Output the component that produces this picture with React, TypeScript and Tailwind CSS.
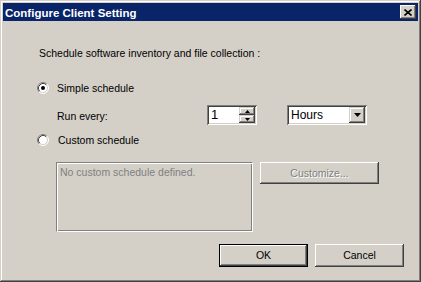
import React from "react";

const font = { fontFamily: '"Liberation Sans", Arial, sans-serif' };

function Radio({ checked }: { checked?: boolean }) {
  return (
    <svg width="12" height="12" viewBox="0 0 12 12" className="shrink-0">
      <circle cx="6" cy="6" r="5" fill="#ffffff" />
      <path d="M2.11 9.89 A5.5 5.5 0 0 1 9.89 2.11" fill="none" stroke="#808080" strokeWidth="1" />
      <path d="M9.89 2.11 A5.5 5.5 0 0 1 2.11 9.89" fill="none" stroke="#ffffff" strokeWidth="1" />
      <path d="M2.82 9.18 A4.5 4.5 0 0 1 9.18 2.82" fill="none" stroke="#404040" strokeWidth="1" />
      <path d="M9.18 2.82 A4.5 4.5 0 0 1 2.82 9.18" fill="none" stroke="#d4d0c8" strokeWidth="1" />
      {checked && <circle cx="6" cy="6" r="2" fill="#000000" />}
    </svg>
  );
}

function SpinBox() {
  return (
    <div className="flex h-[20px] w-[50px] bg-white p-[2px] shadow-[inset_1px_1px_#808080,inset_-1px_-1px_#ffffff,inset_2px_2px_#404040,inset_-2px_-2px_#d4d0c8]">
      <div className="flex-1 pl-[2px] text-[13px] leading-[16px] text-black">1</div>
      <div className="flex w-[16px] flex-col">
        <div className="flex flex-1 items-center justify-center bg-[#d4d0c8] shadow-[inset_-1px_-1px_#404040,inset_1px_1px_#d4d0c8,inset_-2px_-2px_#808080,inset_2px_2px_#ffffff]">
          <svg width="5" height="3" viewBox="0 0 5 3">
            <polygon points="2.5,0 5,3 0,3" fill="#000" />
          </svg>
        </div>
        <div className="flex flex-1 items-center justify-center bg-[#d4d0c8] shadow-[inset_-1px_-1px_#404040,inset_1px_1px_#d4d0c8,inset_-2px_-2px_#808080,inset_2px_2px_#ffffff]">
          <svg width="5" height="3" viewBox="0 0 5 3">
            <polygon points="0,0 5,0 2.5,3" fill="#000" />
          </svg>
        </div>
      </div>
    </div>
  );
}

function Dropdown() {
  return (
    <div className="ml-[30px] flex h-[20px] w-[80px] bg-white p-[2px] shadow-[inset_1px_1px_#808080,inset_-1px_-1px_#ffffff,inset_2px_2px_#404040,inset_-2px_-2px_#d4d0c8]">
      <div className="flex-1 pl-[2px] text-[12px] leading-[16px] text-black">Hours</div>
      <div className="flex w-[16px] items-center justify-center bg-[#d4d0c8] shadow-[inset_-1px_-1px_#404040,inset_1px_1px_#d4d0c8,inset_-2px_-2px_#808080,inset_2px_2px_#ffffff]">
        <svg width="7" height="4" viewBox="0 0 7 4">
          <polygon points="0,0 7,0 3.5,4" fill="#000" />
        </svg>
      </div>
    </div>
  );
}

function Button({ label, primary, disabled, className }: { label: string; primary?: boolean; disabled?: boolean; className?: string }) {
  return (
    <div
      className={
        "flex items-center justify-center bg-[#d4d0c8] text-[10.5px] leading-[13px] " +
        (primary
          ? "border border-black shadow-[inset_-1px_-1px_#404040,inset_1px_1px_#ffffff,inset_-2px_-2px_#808080] "
          : "shadow-[inset_-1px_-1px_#404040,inset_1px_1px_#ffffff,inset_-2px_-2px_#808080] ") +
        (disabled ? "text-[#808080] [text-shadow:1px_1px_0_#ffffff] " : "text-black ") +
        (className ?? "")
      }
    >
      {label}
    </div>
  );
}

export default function App() {
  return (
    <div
      className="flex h-[282px] w-[421px] flex-col bg-[#d4d0c8] p-[3px] shadow-[inset_-1px_-1px_#404040,inset_1px_1px_#d4d0c8,inset_-2px_-2px_#808080,inset_2px_2px_#ffffff]"
      style={font}
    >
      <div className="flex h-[18px] items-start justify-between bg-[#0a246a] pl-[2px] pr-[2px]">
        <span className="mt-[4px] text-[11.5px] font-bold leading-[13px] text-white">Configure Client Setting</span>
        <div className="mt-[2px] flex h-[14px] w-[16px] items-center justify-center bg-[#d4d0c8] shadow-[inset_-1px_-1px_#404040,inset_1px_1px_#ffffff,inset_-2px_-2px_#808080]">
          <svg width="8" height="7" viewBox="0 0 8 7">
            <path d="M0.5 0.5 L7.5 6.5 M7.5 0.5 L0.5 6.5" stroke="#000" strokeWidth="1.6" />
          </svg>
        </div>
      </div>

      <div className="flex flex-1 flex-col pl-[34px] text-[10.5px] leading-[13px] text-black">
        <div className="ml-[2px] mt-[26px]">Schedule software inventory and file collection :</div>

        <div className="mt-[22px] flex h-[12px] items-center">
          <Radio checked />
          <span className="ml-[8px]">Simple schedule</span>
        </div>

        <div className="mt-[11px] flex h-[20px] items-start">
          <span className="ml-[20px] mt-[5px] w-[150px]">Run every:</span>
          <SpinBox />
          <Dropdown />
        </div>

        <div className="mt-[9px] flex h-[12px] items-center">
          <Radio />
          <span className="ml-[9px]">Custom schedule</span>
        </div>

        <div className="mt-[16px] flex items-start">
          <div className="ml-[19px] h-[70px] w-[197px] border-b border-l border-r border-t border-b-white border-l-[#808080] border-r-white border-t-[#808080] px-[3px] pt-[3px] text-[#808080] shadow-[inset_1px_1px_#ffffff,inset_-1px_-1px_#808080]">
            No custom schedule defined.
          </div>
          <Button label="Customize..." disabled className="ml-[7px] h-[22px] w-[119px]" />
        </div>

        <div className="mt-[12px] flex justify-end gap-[7px] pr-[14px]">
          <Button label="OK" primary className="h-[23px] w-[89px]" />
          <Button label="Cancel" className="h-[23px] w-[89px]" />
        </div>
      </div>
    </div>
  );
}
